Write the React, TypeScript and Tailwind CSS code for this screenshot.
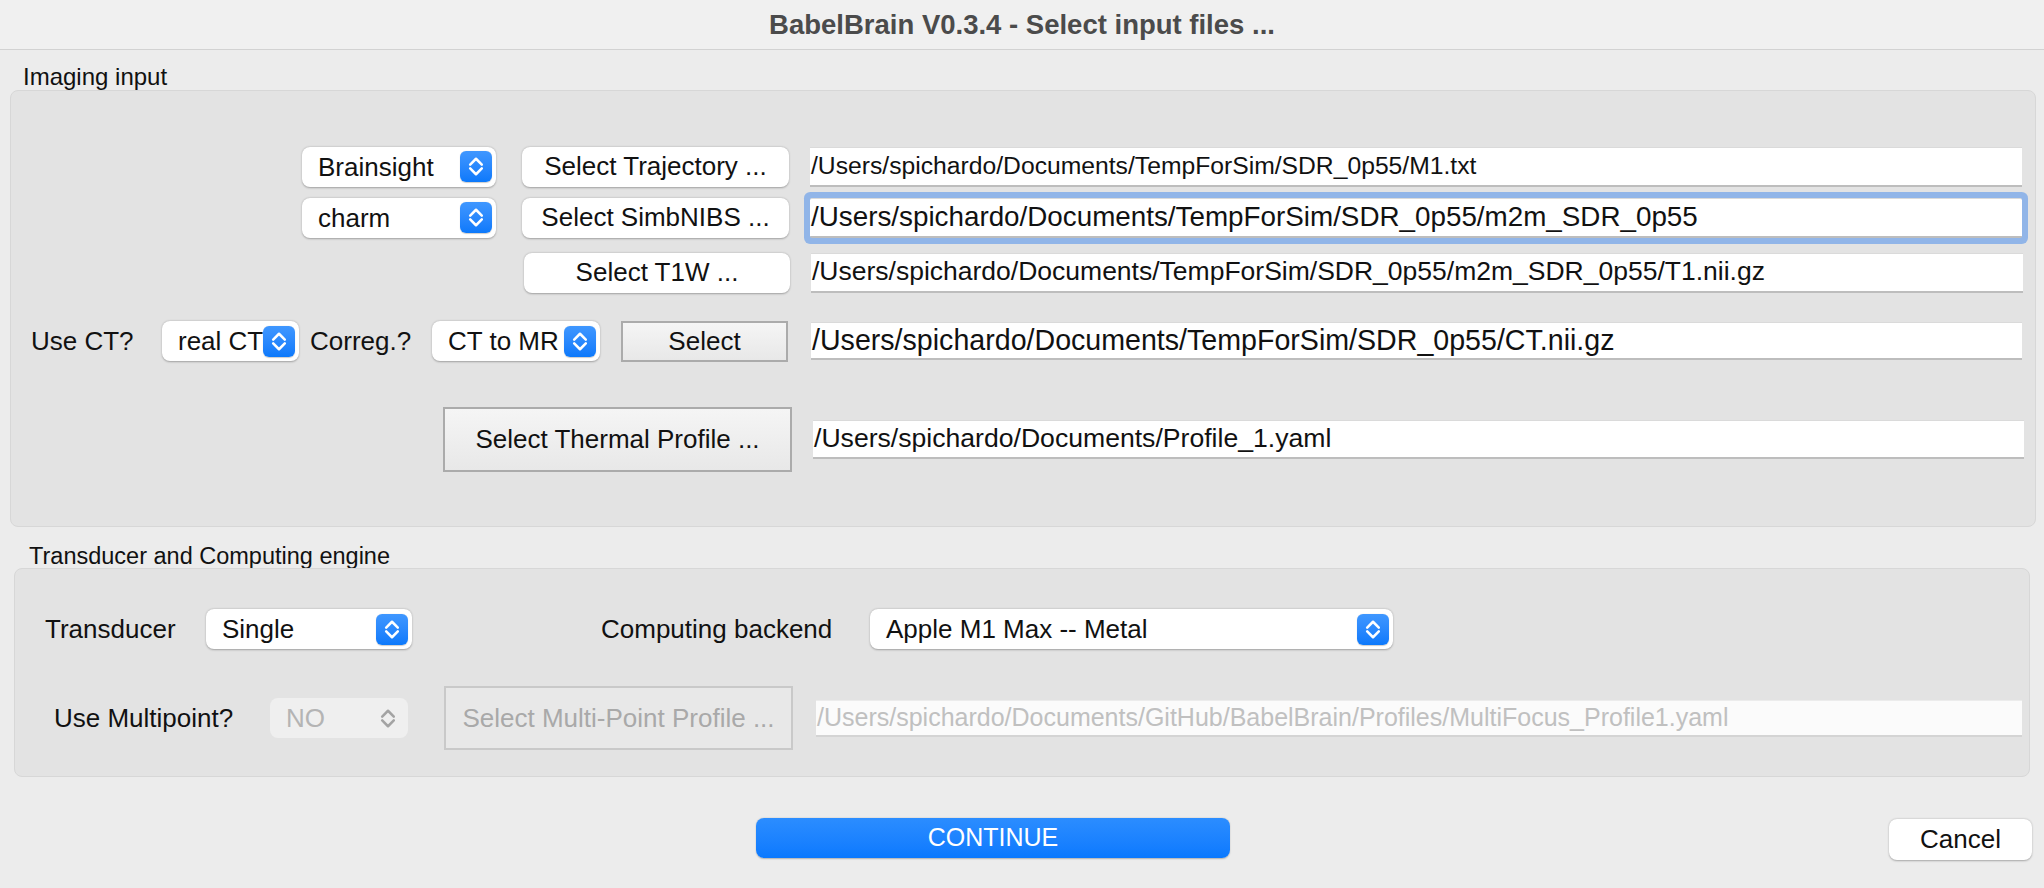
import type { ReactNode } from "react";

type BoxProps = {
  className?: string;
  children?: ReactNode;
};

const Chevrons = ({ color }: { color: string }) => (
  <svg viewBox="0 0 32 32" className="h-full w-full" fill="none">
    <path
      d="M10 14 L16 8 L22 14"
      stroke={color}
      strokeWidth="2.6"
      strokeLinecap="round"
      strokeLinejoin="round"
    />
    <path
      d="M10 18 L16 24 L22 18"
      stroke={color}
      strokeWidth="2.6"
      strokeLinecap="round"
      strokeLinejoin="round"
    />
  </svg>
);

const Stepper = () => (
  <div className="h-[31px] w-[32px] shrink-0 rounded-[6px] bg-gradient-to-b from-[#3f97ff] to-[#0b79fb] shadow-[0_0.5px_1px_rgba(0,0,0,0.2)]">
    <Chevrons color="#ffffff" />
  </div>
);

const PopupSelect = ({
  value,
  className = "",
  disabled = false
}: {
  value: string;
  className?: string;
  disabled?: boolean;
}) => (
  <div
    className={[
      "flex shrink-0 items-center justify-between overflow-hidden whitespace-nowrap rounded-[8px] pl-[16px] pr-[4px] text-[26px]",
      disabled
        ? "bg-[#efefef] text-[#b4b4b4]"
        : "bg-white text-[#111] shadow-[0_0.5px_2px_rgba(0,0,0,0.3)]",
      className
    ].join(" ")}
  >
    <span className="leading-none">{value}</span>
    {disabled ? (
      <div className="h-[31px] w-[32px] shrink-0">
        <Chevrons color="#a3a3a3" />
      </div>
    ) : (
      <Stepper />
    )}
  </div>
);

const RoundButton = ({ className = "", children }: BoxProps) => (
  <div
    className={[
      "flex shrink-0 items-center justify-center whitespace-nowrap rounded-[8px] bg-white text-[26px] text-[#111] shadow-[0_0.5px_2px_rgba(0,0,0,0.3)]",
      className
    ].join(" ")}
  >
    {children}
  </div>
);

const SquareButton = ({
  className = "",
  children,
  disabled = false
}: BoxProps & { disabled?: boolean }) => (
  <div
    className={[
      "flex shrink-0 items-center justify-center whitespace-nowrap border-2 text-[26px]",
      disabled
        ? "border-[#c9c9c9] bg-[#e8e8e8] text-[#a9a9a9]"
        : "border-[#ababab] bg-gradient-to-b from-[#f5f5f5] to-[#e8e8e8] text-[#111]",
      className
    ].join(" ")}
  >
    {children}
  </div>
);

// text size differs a little from field to field in the original capture
const PathField = ({
  value,
  className = "",
  focused = false,
  disabled = false
}: {
  value: string;
  className?: string;
  focused?: boolean;
  disabled?: boolean;
}) => (
  <div
    className={[
      "flex min-w-0 flex-1 items-center overflow-hidden whitespace-nowrap border-t border-b-2 pl-[1px]",
      disabled
        ? "border-t-[#ececec] border-b-[#d4d4d4] bg-[#fbfbfb] text-[#c0c0c0]"
        : "border-t-[#dadada] border-b-[#bdbdbd] bg-white text-[#111]",
      focused ? "rounded-[2px] shadow-[0_0_0_6px_#91b5e8]" : "",
      className
    ].join(" ")}
  >
    {value}
  </div>
);

const Label = ({ className = "", children }: BoxProps) => (
  <div className={["shrink-0 whitespace-nowrap text-[26px] text-[#111]", className].join(" ")}>
    {children}
  </div>
);

export default function App() {
  return (
    <div className="flex h-[888px] w-[2044px] flex-col overflow-hidden bg-[#ececec] font-['Liberation_Sans',Arial,sans-serif]">
      <div className="flex h-[50px] shrink-0 items-center justify-center border-b border-[#d2d2d2] bg-[#f0f0f0] text-[27.5px] font-bold text-[#4b4b4b]">
        BabelBrain V0.3.4 - Select input files ...
      </div>

      <div className="mt-[14px] pl-[23px] text-[24px] leading-[26px] text-[#111]">Imaging input</div>
      <div className="ml-[10px] flex h-[437px] w-[2026px] flex-col rounded-[8px] border border-[#d7d7d7] bg-[#e3e3e3] pt-[55px]">
        <div className="flex h-[41px] items-center">
          <PopupSelect value="Brainsight" className="ml-[291px] h-[40px] w-[194px]" />
          <RoundButton className="ml-[26px] h-[40px] w-[267px]">Select Trajectory ...</RoundButton>
          <PathField
            value="/Users/spichardo/Documents/TempForSim/SDR_0p55/M1.txt"
            className="ml-[21px] mr-[13px] h-[40px] text-[24.7px]"
          />
        </div>
        <div className="mt-[10px] flex h-[41px] items-center">
          <PopupSelect value="charm" className="ml-[291px] h-[40px] w-[194px]" />
          <RoundButton className="ml-[26px] h-[40px] w-[267px]">Select SimbNIBS ...</RoundButton>
          <PathField
            value="/Users/spichardo/Documents/TempForSim/SDR_0p55/m2m_SDR_0p55"
            className="ml-[21px] mr-[13px] h-[40px] text-[27.8px]"
            focused
          />
        </div>
        <div className="mt-[14px] flex h-[41px] items-center">
          <RoundButton className="ml-[513px] h-[40px] w-[266px]">Select T1W ...</RoundButton>
          <PathField
            value="/Users/spichardo/Documents/TempForSim/SDR_0p55/m2m_SDR_0p55/T1.nii.gz"
            className="ml-[21px] mr-[12px] h-[40px] text-[26.5px]"
          />
        </div>
        <div className="mt-[26px] flex h-[44px] items-center">
          <Label className="ml-[20px] w-[131px]">Use CT?</Label>
          <PopupSelect value="real CT" className="h-[40px] w-[137px]" />
          <Label className="ml-[11px] w-[122px]">Correg.?</Label>
          <PopupSelect value="CT to MR" className="h-[40px] w-[168px]" />
          <SquareButton className="ml-[21px] h-[41px] w-[167px]">Select</SquareButton>
          <PathField
            value="/Users/spichardo/Documents/TempForSim/SDR_0p55/CT.nii.gz"
            className="ml-[23px] mr-[13px] h-[38px] text-[28.6px]"
          />
        </div>
        <div className="mt-[44px] flex h-[65px] items-center">
          <SquareButton className="ml-[432px] h-[65px] w-[349px]">Select Thermal Profile ...</SquareButton>
          <PathField
            value="/Users/spichardo/Documents/Profile_1.yaml"
            className="ml-[21px] mr-[11px] h-[39px] text-[26.6px]"
          />
        </div>
      </div>

      <div className="mt-[17px] pl-[29px] text-[23.5px] leading-[24px] text-[#111]">
        Transducer and Computing engine
      </div>
      <div className="ml-[14px] flex h-[209px] w-[2016px] flex-col rounded-[8px] border border-[#d7d7d7] bg-[#e3e3e3] pt-[40px]">
        <div className="flex h-[40px] items-center">
          <Label className="ml-[30px] w-[161px]">Transducer</Label>
          <PopupSelect value="Single" className="h-[40px] w-[206px]" />
          <Label className="ml-[189px] w-[269px]">Computing backend</Label>
          <PopupSelect value="Apple M1 Max -- Metal" className="h-[40px] w-[523px]" />
        </div>
        <div className="mt-[37px] flex h-[64px] items-center">
          <Label className="ml-[39px] w-[216px]">Use Multipoint?</Label>
          <PopupSelect value="NO" className="h-[40px] w-[138px]" disabled />
          <SquareButton className="ml-[36px] h-[64px] w-[349px]" disabled>
            Select Multi-Point Profile ...
          </SquareButton>
          <PathField
            value="/Users/spichardo/Documents/GitHub/BabelBrain/Profiles/MultiFocus_Profile1.yaml"
            className="ml-[23px] mr-[7px] h-[37px] text-[25px]"
            disabled
          />
        </div>
      </div>

      <div className="mt-[41px] flex items-start">
        <div className="ml-[756px] flex h-[40px] w-[474px] items-center justify-center rounded-[8px] bg-gradient-to-b from-[#2b8dff] to-[#0a79fe] text-[25px] text-white shadow-[0_0.5px_1.5px_rgba(0,0,0,0.25)]">
          CONTINUE
        </div>
        <RoundButton className="ml-[659px] mt-[1px] h-[41px] w-[143px] text-[25px]">Cancel</RoundButton>
      </div>
    </div>
  );
}
